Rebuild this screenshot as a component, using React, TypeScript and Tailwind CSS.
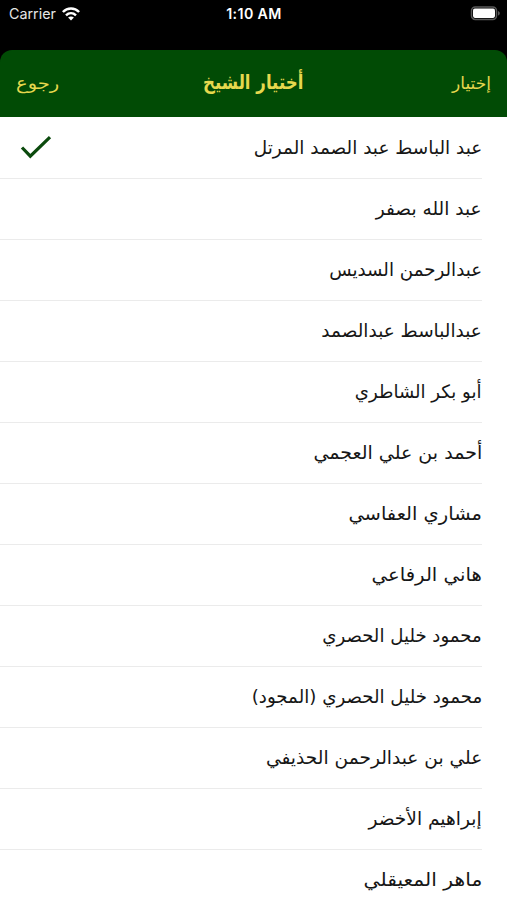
interface Reciter {
  name: string;
  stretch: number;
}

const RECITERS: Reciter[] = [
  { name: 'عبد الباسط عبد الصمد المرتل', stretch: 0.997 },
  { name: 'عبد الله بصفر', stretch: 1.003 },
  { name: 'عبدالرحمن السديس', stretch: 0.986 },
  { name: 'عبدالباسط عبدالصمد', stretch: 0.998 },
  { name: 'أبو بكر الشاطري', stretch: 0.978 },
  { name: 'أحمد بن علي العجمي', stretch: 1.028 },
  { name: 'مشاري العفاسي', stretch: 1.052 },
  { name: 'هاني الرفاعي', stretch: 1.062 },
  { name: 'محمود خليل الحصري', stretch: 0.98 },
  { name: 'محمود خليل الحصري (المجود)', stretch: 0.984 },
  { name: 'علي بن عبدالرحمن الحذيفي', stretch: 1.005 },
  { name: 'إبراهيم الأخضر', stretch: 1.005 },
  { name: 'ماهر المعيقلي', stretch: 1.096 },
];

function WifiIcon() {
  return (
    <svg width="18" height="14" viewBox="0 0 18 14" fill="none" stroke="#fff" strokeWidth="2.5">
      <path d="M.9 5C5.400.4 12.600.4 17.100 5" />
      <path d="M4 8.300c2.900-2.700 7.100-2.700 10 0" />
      <path d="M9 13.600l-2.900-3c1.700-1.500 4.100-1.500 5.800 0z" fill="#fff" stroke="none" />
    </svg>
  );
}

function BatteryIcon() {
  return (
    <svg width="31" height="15" viewBox="0 0 31 15" fill="none">
      <rect x="1.5" y="1" width="25" height="12.500" rx="3.800" stroke="#595959" strokeWidth="1.500" />
      <rect x="3" y="2.600" width="22" height="9.300" rx="1.800" fill="#fff" />
      <path d="M28 5v4.600c1.100-.4 1.800-1.300 1.800-2.300S29.100 5.400 28 5z" fill="#595959" />
    </svg>
  );
}

function StatusBar() {
  return (
    <div className="grid h-[50px] grid-cols-3 items-start pr-1.5 pl-[7px] font-['Inter',sans-serif] text-white">
      <div className="flex items-center gap-[6px] pt-[3px] pl-0.5">
        <span className="text-[14.3px] leading-[22px] text-[#e6e6e6]">Carrier</span>
        <WifiIcon />
      </div>
      <span className="pt-[3px] text-center text-[14.2px] leading-[22px] font-semibold tracking-[0.4px]">
        1:10 AM
      </span>
      <div className="flex justify-end pt-1.5">
        <BatteryIcon />
      </div>
    </div>
  );
}

function NavBar() {
  return (
    <div className="grid h-[67px] grid-cols-3 items-center rounded-t-[12px] bg-[#014b05] px-4 text-[#e6d84e]">
      <button className="origin-left scale-x-[1.15] text-left text-[17px]">رجوع</button>
      <h1 className="scale-x-[0.83] pb-1 text-center text-[20px] font-bold whitespace-nowrap">أختيار الشيخ</h1>
      <button className="text-right text-[17px]">إختيار</button>
    </div>
  );
}

function ReciterRow({ reciter, selected }: { reciter: Reciter; selected: boolean }) {
  return (
    <li className="mr-[25px] flex h-[61px] items-center justify-between border-b border-[#ebebeb] pl-5">
      <span
        className="origin-right text-[18.5px] whitespace-nowrap text-[#161616]"
        style={{ transform: `scaleX(${reciter.stretch})` }}
      >
        {reciter.name}
      </span>
      {selected && (
        <svg width="32" height="24" viewBox="0 0 32 24" fill="none" stroke="#0b4a0d" strokeWidth="3.2">
          <path d="M2 11.500l8.300 8.700L30 1.200" />
        </svg>
      )}
    </li>
  );
}

export default function App() {
  return (
    <div className="h-[900px] w-[507px] overflow-hidden bg-black font-['DejaVu_Sans',sans-serif]">
      <StatusBar />
      <NavBar />
      <ul dir="rtl" className="bg-white pt-px">
        {RECITERS.map((reciter, i) => (
          <ReciterRow key={reciter.name} reciter={reciter} selected={i === 0} />
        ))}
      </ul>
    </div>
  );
}
